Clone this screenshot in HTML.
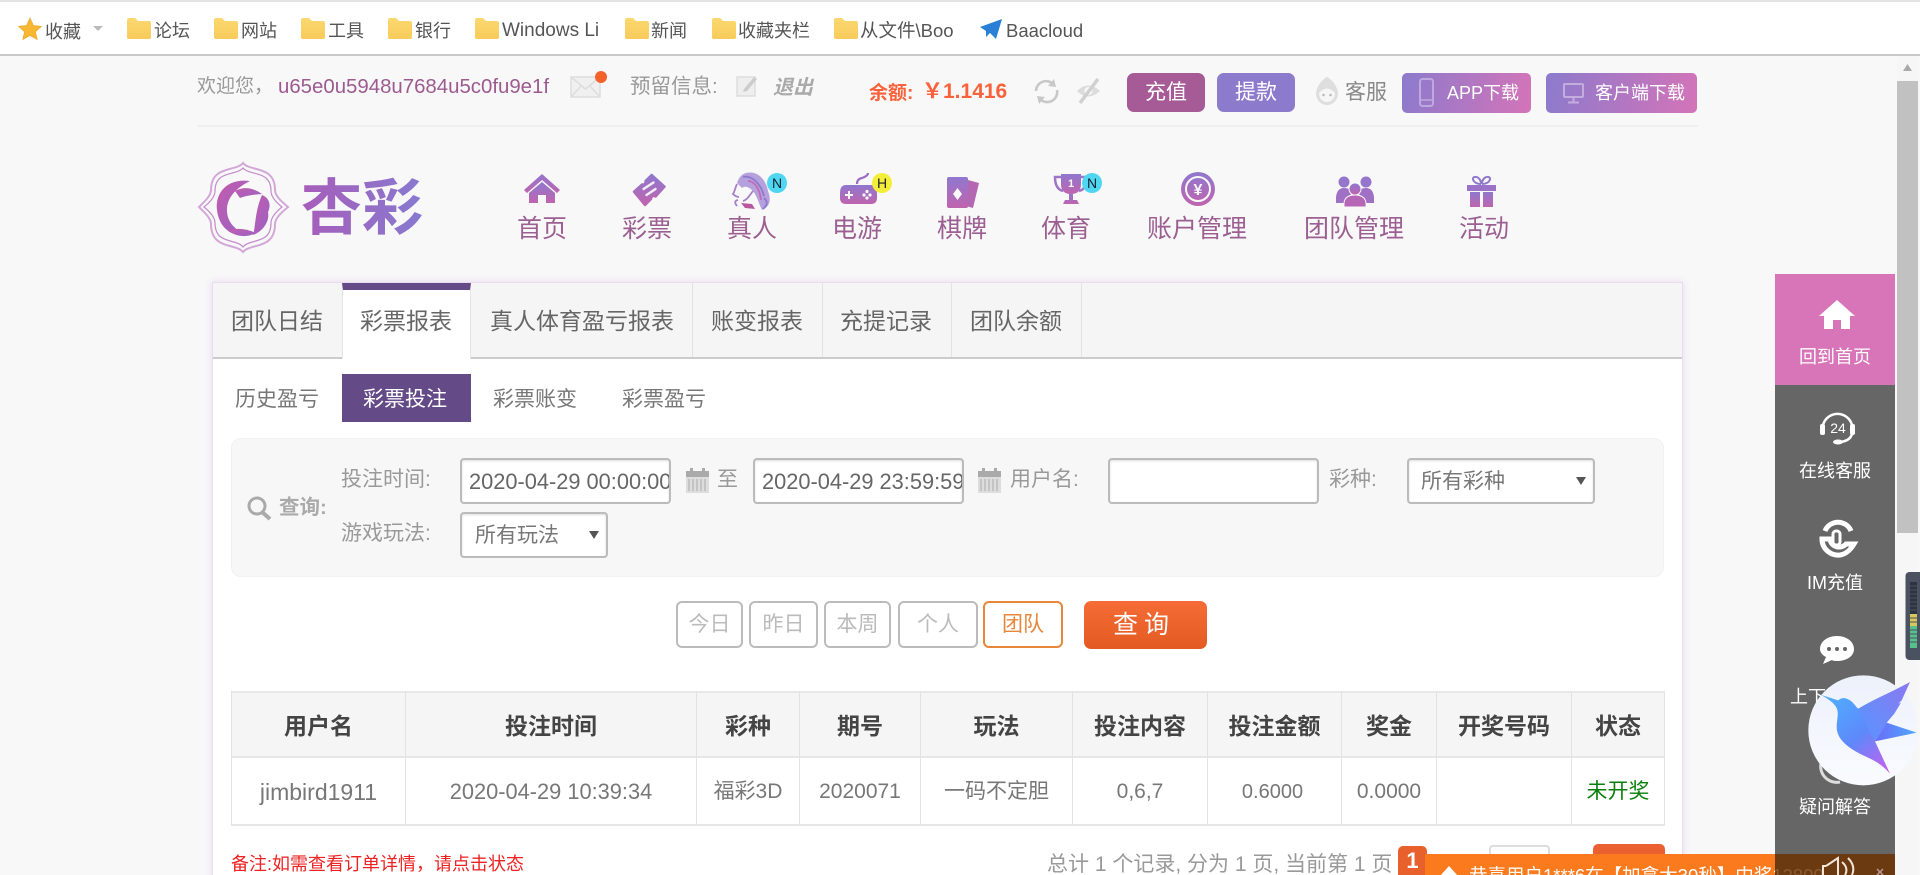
<!DOCTYPE html>
<html lang="zh-CN">
<head>
<meta charset="utf-8">
<title>彩票投注</title>
<style>
html,body{margin:0;padding:0;width:1920px;height:875px;overflow:hidden;background:#f8f8f8}
body{position:relative;font-family:"Liberation Sans","Noto Sans CJK SC",sans-serif;color:#777}
.a{position:absolute;box-sizing:border-box}
.t{position:absolute;white-space:nowrap;line-height:30px;height:30px}
.c{text-align:center;transform:translateX(-50%)}
.n{font-size:25px;color:#9c5f92}
.tab{font-size:23px;color:#666}
.sub{font-size:21px;color:#777}
.lb{font-size:21px;color:#999}
.inp{position:absolute;box-sizing:border-box;background:#fff;border:2px solid #bbb;border-radius:4px;height:46px;overflow:hidden;white-space:nowrap;font-size:21px;line-height:44px;color:#666;box-shadow:inset 0 1px 2px #ddd}
.btn{position:absolute;box-sizing:border-box;top:601px;height:47px;border:2px solid #bbb;border-radius:6px;background:#fff;color:#bbb;font-size:21px;line-height:43px;text-align:center}
.th{position:absolute;top:691px;height:67px;line-height:67px;text-align:center;font-size:23px;font-weight:bold;color:#444;background:#f5f5f5;box-sizing:border-box;border-right:1px solid #e2e2e2;border-top:2px solid #e8e8e8;border-bottom:2px solid #e6e6e6}
.td{position:absolute;top:758px;height:68px;line-height:68px;text-align:center;font-size:21px;color:#777;background:#fff;box-sizing:border-box;border-right:1px solid #e2e2e2;border-bottom:2px solid #e6e6e6}
.bm{font-size:18px;color:#555}
.sd{position:absolute;left:1775px;width:120px;text-align:center;color:#fff;font-size:18px;line-height:26px;height:26px;white-space:nowrap}
.bd{position:absolute;width:20px;height:20px;top:173px;border-radius:50%;font-size:14px;line-height:20px;text-align:center}
</style>
</head>
<body>

<!-- top bookmarks bar -->
<div class="a" style="left:0;top:0;width:1920px;height:56px;background:#fff;border-top:2px solid #e4e4e4;border-bottom:2px solid #c8c8c8"></div>
<svg class="a" style="left:0;top:0" width="1100" height="56">
<defs>
<linearGradient id="fd" x1="0" y1="0" x2="0" y2="1"><stop offset="0" stop-color="#fbd870"/><stop offset="1" stop-color="#f8cb5a"/></linearGradient>
<path id="f" d="M0 2Q0 0 2 0H8L11 3H22Q24 3 24 5V19Q24 21 22 21H2Q0 21 0 19Z" fill="url(#fd)"/>
</defs>
<path d="M30 18L33.4 25.4L41.5 26.3L35.5 31.8L37.2 39.5L30 35.5L22.8 39.5L24.5 31.8L18.5 26.3L26.6 25.4Z" fill="#f7b733" stroke="#e8a520" stroke-width=".6"/>
<path d="M93 26H103L98 31Z" fill="#bbb"/>
<use href="#f" x="127" y="18"/><use href="#f" x="214" y="18"/><use href="#f" x="301" y="18"/><use href="#f" x="388" y="18"/><use href="#f" x="475" y="18"/><use href="#f" x="625" y="18"/><use href="#f" x="712" y="18"/><use href="#f" x="834" y="18"/>
<path d="M980 27L1002 19L996 39L990 33L986 37L986 31Z" fill="#2a7fd6"/>
</svg>
<div class="t bm" style="left:45px;top:17px">收藏</div>
<div class="t bm" style="left:154px;top:16px">论坛</div>
<div class="t bm" style="left:241px;top:16px">网站</div>
<div class="t bm" style="left:328px;top:16px">工具</div>
<div class="t bm" style="left:415px;top:16px">银行</div>
<div class="t bm" style="left:502px;top:16px;font-size:19px">Windows Li</div>
<div class="t bm" style="left:651px;top:16px">新闻</div>
<div class="t bm" style="left:738px;top:16px">收藏夹栏</div>
<div class="t bm" style="left:860px;top:16px;font-size:18.5px">从文件\Boo</div>
<div class="t bm" style="left:1006px;top:16px;font-size:18.5px">Baacloud</div>

<!-- scrollbar -->
<div class="a" style="left:1897px;top:56px;width:21px;height:819px;background:#f6f6f6"></div>
<div class="a" style="left:1897px;top:81px;width:21px;height:452px;background:#c1c1c1"></div>
<svg class="a" style="left:1897px;top:60px" width="21" height="16"><path d="M10.5 4L15 11H6Z" fill="#a8a8a8"/></svg>

<!-- user row -->
<div class="t" style="left:197px;top:72px;font-size:19px;color:#999">欢迎您，</div>
<div class="t" style="left:278px;top:72px;font-size:20.4px;color:#9c5a90">u65e0u5948u7684u5c0fu9e1f</div>
<svg class="a" style="left:568px;top:70px" width="44" height="32">
<rect x="3" y="7" width="29" height="20" fill="#f0f0f0" stroke="#ddd" stroke-width="1.5"/>
<path d="M3 7L17.5 19L32 7M3 27L13 16M32 27L22 16" fill="none" stroke="#ddd" stroke-width="1.5"/>
<circle cx="33" cy="7" r="6" fill="#f4622c"/>
</svg>
<div class="t" style="left:630px;top:72px;font-size:20.5px;color:#999">预留信息:</div>
<svg class="a" style="left:735px;top:74px" width="24" height="24">
<rect x="2" y="3" width="18" height="19" fill="#eee" stroke="#ddd" stroke-width="1.5"/>
<path d="M9 15L19 3L22 5L12 17L8 18Z" fill="#ccc"/>
</svg>
<div class="t" style="left:773px;top:73px;font-size:20px;font-weight:bold;font-style:italic;color:#aaa">退出</div>
<div class="t" style="left:869px;top:79px;font-size:19px;font-weight:bold;color:#f9623a">余额:</div>
<div class="t" style="left:922px;top:77px;font-size:21px;font-weight:bold;color:#f9623a">￥1.1416</div>
<svg class="a" style="left:1032px;top:78px" width="72" height="28">
<path d="M4 13A10 10 0 0 1 21 6M25 12A10 10 0 0 1 8 21" fill="none" stroke="#c8c8c8" stroke-width="2.6"/>
<path d="M22 1L24 9L16 8ZM7 26L5 18L13 19Z" fill="#c8c8c8"/>
<path d="M45 13Q56 2 68 13Q56 24 45 13Z" fill="#dcdcdc"/>
<circle cx="56.5" cy="13" r="4" fill="#f8f8f8"/>
<path d="M48 25L66 1" stroke="#d0d0d0" stroke-width="3.5"/>
</svg>
<div class="a" style="left:1127px;top:73px;width:78px;height:39px;border-radius:7px;background:#a65a96;color:#fff;font-size:21px;line-height:39px;text-align:center">充值</div>
<div class="a" style="left:1217px;top:73px;width:78px;height:39px;border-radius:7px;background:#8c7acc;color:#fff;font-size:21px;line-height:39px;text-align:center">提款</div>
<svg class="a" style="left:1314px;top:76px" width="26" height="30">
<path d="M13 1C17 3 23 9 24 17C24 24 19 29 13 29C7 29 2 24 2 17C3 9 9 3 13 1Z" fill="#dedede"/>
<path d="M5 17Q13 8 21 17C21 23 17 26 13 26C9 26 5 23 5 17Z" fill="#f6f6f6"/>
<circle cx="9.5" cy="19" r="1.3" fill="#bbb"/><circle cx="16.5" cy="19" r="1.3" fill="#bbb"/>
</svg>
<div class="t" style="left:1345px;top:78px;font-size:21px;color:#888">客服</div>
<div class="a" style="left:1402px;top:73px;width:129px;height:40px;border-radius:5px;background:linear-gradient(100deg,#8c7acc,#d474b8)"></div>
<div class="t" style="left:1447px;top:78px;font-size:18px;color:#fff">APP下载</div>
<svg class="a" style="left:1418px;top:78px" width="18" height="32"><rect x="2" y="1" width="13" height="27" rx="2.5" fill="none" stroke="#bda8e0" stroke-width="2"/><path d="M2 22H15" stroke="#bda8e0" stroke-width="1.5"/></svg>
<div class="a" style="left:1546px;top:73px;width:151px;height:40px;border-radius:5px;background:linear-gradient(100deg,#8c7acc,#d474b8)"></div>
<div class="t" style="left:1595px;top:78px;font-size:18px;color:#fff">客户端下载</div>
<svg class="a" style="left:1562px;top:82px" width="24" height="24"><rect x="2" y="2" width="19" height="13" rx="1" fill="none" stroke="#c3addf" stroke-width="2"/><path d="M11.5 15V20M6 20.5H17" stroke="#c3addf" stroke-width="2"/></svg>
<div class="a" style="left:197px;top:125px;width:1501px;height:2px;background:#f0f0f0"></div>

<!-- logo + nav icons -->
<svg class="a" style="left:0;top:150px" width="1560" height="110" viewBox="0 150 1560 110">
<defs>
<linearGradient id="lg" x1="0" y1="0" x2="1" y2="1"><stop offset="0" stop-color="#c25cae"/><stop offset="1" stop-color="#9a62c4"/></linearGradient>
<linearGradient id="lt" x1="0" y1="0" x2="1" y2="0"><stop offset="0" stop-color="#a75dba"/><stop offset="1" stop-color="#877ad0"/></linearGradient>
<linearGradient id="g" x1="0" y1="0" x2="0" y2="1"><stop offset="0" stop-color="#8f78cf"/><stop offset="1" stop-color="#c064ae"/></linearGradient>
</defs>
<path d="M243 163C250 172 275 165 275 190C275 196 282 202 288 207C282 212 275 218 275 224C275 250 250 243 243 252C236 243 211 250 211 224C211 218 204 212 199 207C204 202 211 196 211 190C211 165 236 172 243 163Z" fill="none" stroke="#d3a8d8" stroke-width="2"/>
<path d="M243 168C250 176 271 170 271 191C271 197 277 203 282 207C277 211 271 217 271 223C271 245 250 238 243 247C236 238 215 245 215 223C215 217 209 211 204 207C209 203 215 197 215 191C215 170 236 176 243 168Z" fill="none" stroke="#c48ccc" stroke-width="1.2"/>
<path d="M250 181C225 178 215 195 217 210C219 228 232 238 250 235C236 232 226 222 227 208C228 197 236 188 250 181Z" fill="url(#lg)"/>
<path d="M235 191Q248 184 262 194Q248 195 240 198Z" fill="url(#lg)"/>
<path d="M262 195C270 198 271 206 268 212C270 222 262 232 253 235C256 224 255 211 262 195Z" fill="url(#lg)"/>
<path d="M228 231Q240 226 256 233Q242 240 228 231Z" fill="url(#lg)"/>
<text x="301" y="229" font-family="'Noto Sans CJK SC',sans-serif" font-weight="bold" font-size="61" fill="url(#lt)">杏彩</text>

<!-- home -->
<path d="M542 174L560 190L557 193L542 180L527 193L524 190Z" fill="url(#g)"/>
<path d="M529 193L542 182L555 193V203H546V195H538V203H529Z" fill="url(#g)"/>
<!-- ticket -->
<path d="M651.7 175L664.5 186.7L655.5 196.5Q651.5 194.5 651 199L645 205L634 191.7L642 184.5Q646 185 645.5 181Z" fill="url(#g)" stroke="url(#g)" stroke-width="2.5" stroke-linejoin="round"/>
<path d="M643.5 189L653.5 182.5M646.5 195L655.5 189" stroke="#f4eef8" stroke-width="2.4" stroke-linecap="round"/>
<!-- woman -->
<path d="M746 173C758 170 766 180 768 191C771 199 771 206 762 210C759 204 757 196 753 191C748 186 744 186 742 188L737 183C739 177 742 174 746 173Z" fill="#b5a2dc"/>
<g fill="none" stroke-width="1.8">
<path d="M743 177C752 175 761 184 764 196" stroke="#8f78cf"/>
<path d="M748 181C755 181 760 190 761 200" stroke="#c06cb6"/>
<path d="M737 184C735 188 735 191 733 194C735 196 737 197 739 197" stroke="#a77dc8"/>
<path d="M753 191C749 196 747 200 743 201M737 206Q733 201 738 200" stroke="#a77dc8"/>
<path d="M764 198Q770 203 763 209" stroke="#8f78cf"/>
</g>
<path d="M741 203L752 204L755 209L745 208Z" fill="#b8589e"/>
<!-- gamepad -->
<path d="M846 185H871Q877 185 877 193V198Q877 204 871 204H846Q840 204 840 198V193Q840 185 846 185Z" fill="url(#g)"/>
<path d="M845 195H853M849 191V199" stroke="#f8f8f8" stroke-width="2"/>
<circle cx="867" cy="191.5" r="1.6" fill="#f8f8f8"/><circle cx="867" cy="198" r="1.6" fill="#f8f8f8"/><circle cx="864" cy="195" r="1.6" fill="#f8f8f8"/><circle cx="870" cy="195" r="1.6" fill="#f8f8f8"/>
<path d="M857 184Q857 179 862 178Q868 176 868 173" fill="none" stroke="#9a70c4" stroke-width="2.2"/>
<!-- cards -->
<path d="M968 180L979 183L973 208L966 206Z" fill="#b468b4"/>
<rect x="947" y="177" width="21" height="31" rx="2" fill="url(#g)"/>
<path d="M957.5 188L962 194L957.5 200L953 194Z" fill="#f8f8f8"/>
<!-- trophy -->
<path d="M1061 174H1081V184Q1081 194 1071 194Q1061 194 1061 184Z" fill="url(#g)"/>
<path d="M1061 177H1055Q1055 189 1063 191M1081 177H1087Q1087 189 1079 191" fill="none" stroke="#9d76c6" stroke-width="2.5"/>
<path d="M1069 194H1073V200H1077L1079 204H1063L1065 200H1069Z" fill="url(#g)"/>
<text x="1071" y="187" text-anchor="middle" font-size="11" font-weight="bold" fill="#f8f8f8">1</text>
<!-- coin -->
<circle cx="1198" cy="189" r="17" fill="url(#g)"/>
<circle cx="1198" cy="189" r="12" fill="none" stroke="#f8f8f8" stroke-width="2"/>
<text x="1198" y="195" text-anchor="middle" font-size="16" font-weight="bold" fill="#f8f8f8">¥</text>
<!-- people -->
<circle cx="1344" cy="182" r="5.5" fill="#9576cc"/><circle cx="1366" cy="182" r="5.5" fill="#9576cc"/>
<path d="M1336 203V197Q1337 188 1344 188Q1350 188 1352 192L1346 203ZM1374 203V197Q1373 188 1366 188Q1360 188 1358 192L1364 203Z" fill="#a070c6"/>
<circle cx="1355" cy="189" r="6" fill="url(#g)" stroke="#f8f8f8"/>
<path d="M1344 207V203Q1345 195 1355 195Q1365 195 1366 203V207Z" fill="#b566b6" stroke="#f8f8f8"/>
<!-- gift -->
<path d="M1467 185H1496V191H1467Z" fill="#9a72c8"/>
<path d="M1470 192H1480V207H1470ZM1483 192H1493V207H1483Z" fill="url(#g)"/>
<path d="M1481 184C1472 184 1471 176 1476 177C1479 177 1481 181 1481.5 184C1482 181 1484 177 1487 177C1492 176 1491 184 1482 184" fill="none" stroke="#9078cc" stroke-width="2"/>
</svg>
<div class="bd" style="left:767px;background:#4fd6f0;color:#123">N</div>
<div class="bd" style="left:872px;background:#f2ee3a;color:#222">H</div>
<div class="bd" style="left:1082px;background:#4fd6f0;color:#123">N</div>

<div class="t n c" style="left:542px;top:214px">首页</div>
<div class="t n c" style="left:647px;top:214px">彩票</div>
<div class="t n c" style="left:752px;top:214px">真人</div>
<div class="t n c" style="left:857px;top:214px">电游</div>
<div class="t n c" style="left:962px;top:214px">棋牌</div>
<div class="t n c" style="left:1066px;top:214px">体育</div>
<div class="t n c" style="left:1197px;top:214px">账户管理</div>
<div class="t n c" style="left:1354px;top:214px">团队管理</div>
<div class="t n c" style="left:1484px;top:214px">活动</div>

<!-- main panel -->
<div class="a" style="left:212px;top:282px;width:1471px;height:620px;background:#fff;border:1px solid #e8dcee;box-shadow:0 0 8px #e6d9ee"></div>
<div class="a" style="left:213px;top:283px;width:1469px;height:74px;background:#f6f5f5"></div>
<div class="a" style="left:213px;top:357px;width:1469px;height:2px;background:#ccc"></div>
<div class="a" style="left:342px;top:283px;width:129px;height:76px;background:#fff;border-top:7px solid #654a88;border-left:1px solid #e5e5e5;border-right:1px solid #e5e5e5"></div>
<div class="a" style="left:692px;top:283px;width:1px;height:74px;background:#e2e2e2"></div>
<div class="a" style="left:822px;top:283px;width:1px;height:74px;background:#e2e2e2"></div>
<div class="a" style="left:951px;top:283px;width:1px;height:74px;background:#e2e2e2"></div>
<div class="a" style="left:1081px;top:283px;width:1px;height:74px;background:#e2e2e2"></div>
<div class="t tab" style="left:231px;top:306px">团队日结</div>
<div class="t tab" style="left:360px;top:306px">彩票报表</div>
<div class="t tab" style="left:490px;top:306px">真人体育盈亏报表</div>
<div class="t tab" style="left:711px;top:306px">账变报表</div>
<div class="t tab" style="left:840px;top:306px">充提记录</div>
<div class="t tab" style="left:970px;top:306px">团队余额</div>

<div class="a" style="left:342px;top:374px;width:129px;height:48px;background:#654a88"></div>
<div class="t sub" style="left:235px;top:385px">历史盈亏</div>
<div class="t sub" style="left:363px;top:385px;color:#fff">彩票投注</div>
<div class="t sub" style="left:493px;top:385px">彩票账变</div>
<div class="t sub" style="left:622px;top:385px">彩票盈亏</div>

<!-- query -->
<div class="a" style="left:231px;top:438px;width:1433px;height:139px;background:#f7f7f7;border:1px solid #f1f1f1;border-radius:10px"></div>
<svg class="a" style="left:246px;top:495px" width="28" height="26"><circle cx="11" cy="11" r="8" fill="none" stroke="#aaa" stroke-width="3"/><path d="M16 17L24 24" stroke="#aaa" stroke-width="4"/></svg>
<div class="t" style="left:279px;top:493px;font-size:20.5px;font-weight:bold;color:#aaa">查询:</div>
<div class="t lb" style="left:341px;top:465px">投注时间:</div>
<div class="inp" style="left:460px;top:458px;width:211px;padding-left:7px;font-size:21.8px">2020-04-29 00:00:00</div>
<svg class="a" style="left:686px;top:468px" width="24" height="26"><path d="M0 3H23V25H0Z" fill="#ddd"/><path d="M0 3H23V9H0Z" fill="#aaa"/><rect x="4" y="0" width="3" height="5" fill="#aaa"/><rect x="16" y="0" width="3" height="5" fill="#aaa"/><path d="M3 11V23M7 11V23M11 11V23M15 11V23M19 11V23" stroke="#bbb" stroke-width="1.5"/></svg>
<div class="t lb" style="left:717px;top:465px">至</div>
<div class="inp" style="left:753px;top:458px;width:211px;padding-left:7px;font-size:21.8px">2020-04-29 23:59:59</div>
<svg class="a" style="left:978px;top:468px" width="24" height="26"><path d="M0 3H23V25H0Z" fill="#ddd"/><path d="M0 3H23V9H0Z" fill="#aaa"/><rect x="4" y="0" width="3" height="5" fill="#aaa"/><rect x="16" y="0" width="3" height="5" fill="#aaa"/><path d="M3 11V23M7 11V23M11 11V23M15 11V23M19 11V23" stroke="#bbb" stroke-width="1.5"/></svg>
<div class="t lb" style="left:1010px;top:465px">用户名:</div>
<div class="inp" style="left:1108px;top:458px;width:211px"></div>
<div class="t lb" style="left:1329px;top:465px">彩种:</div>
<div class="inp" style="left:1407px;top:458px;width:188px;padding-left:12px;color:#777">所有彩种</div>
<svg class="a" style="left:1576px;top:476px" width="10" height="10"><path d="M0 1H10L5 9Z" fill="#555"/></svg>
<div class="t lb" style="left:341px;top:519px">游戏玩法:</div>
<div class="inp" style="left:460px;top:512px;width:148px;padding-left:13px;color:#777">所有玩法</div>
<svg class="a" style="left:589px;top:530px" width="10" height="10"><path d="M0 1H10L5 9Z" fill="#555"/></svg>

<!-- buttons -->
<div class="btn" style="left:676px;width:67px">今日</div>
<div class="btn" style="left:749px;width:69px">昨日</div>
<div class="btn" style="left:824px;width:67px">本周</div>
<div class="btn" style="left:898px;width:80px">个人</div>
<div class="btn" style="left:983px;width:80px;border-color:#e8873c;color:#e8873c">团队</div>
<div class="a" style="left:1084px;top:601px;width:123px;height:48px;border-radius:7px;background:linear-gradient(#f56c36,#e35a22);color:#fff;font-size:25px;line-height:48px;text-align:left;letter-spacing:6px;padding-left:29px">查询</div>

<!-- table -->
<div class="a" style="left:231px;top:691px;width:1px;height:135px;background:#e2e2e2"></div>
<div class="th" style="left:232px;width:174px">用户名</div>
<div class="th" style="left:406px;width:291px">投注时间</div>
<div class="th" style="left:697px;width:103px">彩种</div>
<div class="th" style="left:800px;width:121px">期号</div>
<div class="th" style="left:921px;width:152px">玩法</div>
<div class="th" style="left:1073px;width:135px">投注内容</div>
<div class="th" style="left:1208px;width:134px">投注金额</div>
<div class="th" style="left:1342px;width:95px">奖金</div>
<div class="th" style="left:1437px;width:135px">开奖号码</div>
<div class="th" style="left:1572px;width:93px">状态</div>
<div class="td" style="left:232px;width:174px;font-size:23px">jimbird1911</div>
<div class="td" style="left:406px;width:291px;font-size:21.8px">2020-04-29 10:39:34</div>
<div class="td" style="left:697px;width:103px">福彩3D</div>
<div class="td" style="left:800px;width:121px">2020071</div>
<div class="td" style="left:921px;width:152px">一码不定胆</div>
<div class="td" style="left:1073px;width:135px">0,6,7</div>
<div class="td" style="left:1208px;width:134px;font-size:20px;padding-right:4px">0.6000</div>
<div class="td" style="left:1342px;width:95px">0.0000</div>
<div class="td" style="left:1437px;width:135px"></div>
<div class="td" style="left:1572px;width:93px;color:#0a800a">未开奖</div>

<div class="t" style="left:231px;top:849px;font-size:18px;color:#e22">备注:如需查看订单详情，请点击状态</div>
<div class="t" style="left:1047px;top:850px;font-size:21px;color:#999">总计 1 个记录, 分为 1 页, 当前第 1 页</div>
<div class="a" style="left:1489px;top:845px;width:61px;height:20px;background:#fff;border:2px solid #ddd;border-radius:4px"></div>
<div class="a" style="left:1593px;top:844px;width:72px;height:20px;background:#ea6030;border-radius:5px"></div>

<!-- bottom bar -->
<div class="a" style="left:1398px;top:846px;width:29px;height:29px;background:#e8602c;border-radius:5px 5px 0 0;color:#fff;font-size:22px;font-weight:bold;line-height:29px;text-align:center">1</div>
<div class="a" style="left:1425px;top:854px;width:470px;height:21px;background:#fb7a1e;overflow:hidden">
<svg class="a" style="left:15px;top:12px" width="18" height="10"><path d="M9 0L18 10H0Z" fill="#fff"/></svg>
<div class="t" style="left:44px;top:7px;font-size:18.5px;color:#fff">恭喜用户1***6在【加拿大30秒】中奖12800</div>
</div>

<!-- side panel -->
<div class="a" style="left:1775px;top:274px;width:120px;height:111px;background:#d874b8"></div>
<div class="a" style="left:1775px;top:385px;width:120px;height:469px;background:#666"></div>
<div class="a" style="left:1775px;top:854px;width:120px;height:21px;background:#6b3a10;overflow:hidden">
<div class="t" style="left:-306px;top:7px;font-size:18.5px;color:#8c5a30">恭喜用户1***6在【加拿大30秒】中奖12800</div>
</div>
<svg class="a" style="left:1775px;top:274px" width="120" height="601" viewBox="1775 274 120 601">
<path d="M1837 300L1855 316H1850V329H1841V320H1833V329H1824V316H1819Z" fill="#fff"/>
<path d="M1823 430V425A15 15 0 0 1 1852 425V432" fill="none" stroke="#fff" stroke-width="2.5"/>
<rect x="1820" y="424" width="5" height="11" rx="2" fill="#fff"/><rect x="1850" y="424" width="5" height="11" rx="2" fill="#fff"/>
<path d="M1852 434Q1850 441 1840 442" fill="none" stroke="#fff" stroke-width="2.5"/><ellipse cx="1838" cy="442" rx="5" ry="2.5" fill="#fff"/>
<text x="1838" y="433" text-anchor="middle" font-size="14" font-family="Liberation Sans" fill="#fff">24</text>
<path d="M1851 531A14 14 0 0 0 1825 531M1822 539C1822 550 1832 556 1840 555C1847 554 1851 549 1854 544H1846C1842 549 1831 548 1830 539Z" fill="none" stroke="#fff" stroke-width="5"/>
<rect x="1833" y="531" width="7" height="14" rx="3" fill="none" stroke="#fff" stroke-width="3"/>
<path d="M1837 636C1847 636 1854 642 1854 649C1854 656 1847 661 1837 661C1835 661 1833 661 1832 660L1823 664L1826 657C1822 655 1820 652 1820 649C1820 642 1827 636 1837 636Z" fill="#fff"/>
<circle cx="1829" cy="649" r="2" fill="#666"/><circle cx="1837" cy="649" r="2" fill="#666"/><circle cx="1845" cy="649" r="2" fill="#666"/>
<path d="M1822 760A16 16 0 0 0 1840 782" fill="none" stroke="#ddd" stroke-width="3"/>
<path d="M1826 866L1838 858V875M1826 866H1823V875M1842 862Q1849 868 1845 875M1848 858Q1856 866 1852 875" fill="none" stroke="#f2e6da" stroke-width="2"/>
<path d="M1877 869L1883 875M1883 869L1877 875" stroke="#b99" stroke-width="1.5"/>
</svg>
<div class="sd" style="top:344px">回到首页</div>
<div class="sd" style="top:458px">在线客服</div>
<div class="sd" style="top:570px">IM充值</div>
<div class="sd" style="top:684px">上下级转账</div>
<div class="sd" style="top:794px">疑问解答</div>

<!-- audio widget -->
<svg class="a" style="left:1905px;top:572px" width="15" height="90">
<rect x="0.5" y="0" width="20" height="88" rx="4" fill="#4a5160"/>
<rect x="5" y="10" width="7" height="32" fill="#2d3340"/>
<rect x="5" y="42" width="7" height="12" fill="#d6c85a"/>
<rect x="5" y="54" width="7" height="22" fill="#58c08c"/>
<path d="M5 14H12M5 18H12M5 22H12M5 26H12M5 30H12M5 34H12M5 38H12M5 46H12M5 50H12M5 58H12M5 62H12M5 66H12M5 70H12" stroke="#4a5160" stroke-width="1"/>
</svg>

<!-- bird -->
<svg class="a" style="left:1805px;top:672px" width="115" height="118" viewBox="0 0 345 354">
<defs>
<linearGradient id="b" x1="0.1" y1="0.1" x2="0.8" y2="1"><stop offset="0" stop-color="#4fabff"/><stop offset=".55" stop-color="#5f88fa"/><stop offset="1" stop-color="#b866f0"/></linearGradient>
<linearGradient id="bt" x1="0" y1="0" x2="1" y2="0"><stop offset="0" stop-color="#6a6cf8"/><stop offset="1" stop-color="#4fa8ff"/></linearGradient>
<linearGradient id="bw" x1="1" y1="0" x2="0" y2="1"><stop offset="0" stop-color="#8c78f0"/><stop offset="1" stop-color="#5596ff"/></linearGradient>
<linearGradient id="bc" x1="0" y1="0" x2="0" y2="1"><stop offset="0" stop-color="#edf1fb"/><stop offset="1" stop-color="#f9fbff"/></linearGradient>
</defs>
<circle cx="175" cy="175" r="165" fill="url(#bc)"/>
<path d="M245 152L335 182L210 208Z" fill="url(#bt)"/>
<path d="M45 68L100 85C108 76 122 76 135 85C147 93 152 104 160 110L245 152L210 208L255 305C237 285 220 272 200 262C175 250 150 240 128 222C105 204 95 185 95 165C95 140 105 118 90 100C78 86 62 76 45 68Z" fill="url(#b)"/>
<path d="M160 110C200 85 260 60 315 30L290 85L280 95L288 92L268 125L245 152L210 208L190 170Z" fill="url(#bw)"/>
</svg>

</body>
</html>
